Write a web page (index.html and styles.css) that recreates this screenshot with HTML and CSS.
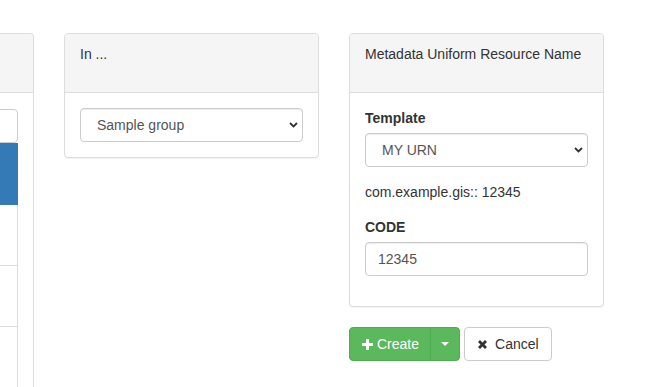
FILE: index.html
```html
<!DOCTYPE html>
<html>
<head>
<meta charset="utf-8">
<link rel="stylesheet" href="styles.css">
</head>
<body>
<div class="row">
  <div class="col">
    <div class="panel panel-list">
      <div class="panel-heading"></div>
      <div class="panel-body list-body">
        <div class="list">
          <div class="list-search"></div>
          <div class="list-item active"></div>
          <div class="list-item"></div>
          <div class="list-item"></div>
          <div class="list-item"></div>
        </div>
      </div>
    </div>
  </div>
  <div class="col">
    <div class="panel">
      <div class="panel-heading">In ...</div>
      <div class="panel-body">
        <div class="select-wrap">
          <select class="form-control"><option>Sample group</option></select>
          <svg class="chev" width="9" height="6" viewBox="0 0 9 6"><path d="M1 1 L4.5 4.5 L8 1" fill="none" stroke="#333" stroke-width="1.8"/></svg>
        </div>
      </div>
    </div>
  </div>
  <div class="col">
    <div class="panel">
      <div class="panel-heading">Metadata Uniform Resource Name</div>
      <div class="panel-body">
        <div class="form-group">
          <label class="label">Template</label>
          <div class="select-wrap">
            <select class="form-control"><option>MY URN</option></select>
            <svg class="chev" width="9" height="6" viewBox="0 0 9 6"><path d="M1 1 L4.5 4.5 L8 1" fill="none" stroke="#333" stroke-width="1.8"/></svg>
          </div>
        </div>
        <p class="urn">com.example.gis:: 12345</p>
        <div class="form-group">
          <label class="label">CODE</label>
          <input class="form-control input" type="text" value="12345">
        </div>
      </div>
    </div>
    <div class="actions">
      <div class="btn-group">
        <button class="btn btn-success main"><svg width="11" height="11" viewBox="0 0 11 11"><path d="M4 0h3v4h4v3H7v4H4V7H0V4h4z" fill="#fff"/></svg>Create</button>
        <button class="btn btn-success caret-btn"><span class="caret"></span></button>
      </div>
      <button class="btn btn-default"><svg width="11" height="11" viewBox="0 0 11 11"><path d="M1 3 L3 1 L5.5 3.5 L8 1 L10 3 L7.5 5.5 L10 8 L8 10 L5.5 7.5 L3 10 L1 8 L3.5 5.5 Z" fill="#333"/></svg>Cancel</button>
    </div>
  </div>
</div>
</body>
</html>
```

FILE: styles.css
```css
* { box-sizing: border-box; }
html, body { margin: 0; padding: 0; background: #fff; overflow: hidden; }
body {
  font-family: "Liberation Sans", Arial, sans-serif;
  font-size: 14px;
  line-height: 20px;
  color: #333;
  height: 387px;
}
.row {
  display: flex;
  gap: 30px;
  margin-left: -221px;
  padding-top: 33px;
}
.col { width: 255px; flex: none; }
.panel {
  border: 1px solid #ddd;
  border-radius: 4px;
  background: #fff;
  box-shadow: 0 1px 1px rgba(0,0,0,.05);
  margin-bottom: 20px;
}
.panel-list { margin-bottom: 0; border-bottom: none; border-radius: 4px 4px 0 0; }
.panel-heading {
  height: 59px;
  padding: 10px 15px;
  background: #f5f5f5;
  border-bottom: 1px solid #ddd;
  border-radius: 3px 3px 0 0;
  color: #333;
}
.panel-body { padding: 15px; }
.list-body { padding-bottom: 0; height: 294px; overflow: hidden; }
.list { display: flex; flex-direction: column; }
.list-search {
  height: 34px;
  margin-top: 1px;
  border: 1px solid #ccc;
  border-radius: 4px;
  flex: none;
}
.list-item {
  height: 61px;
  border: 1px solid #ddd;
  border-top: none;
  flex: none;
}
.list-item.active {
  height: 62px;
  background: #337ab7;
  border-color: #337ab7;
}
.select-wrap { position: relative; }
.form-control {
  display: block;
  width: 100%;
  height: 34px;
  padding: 6px 16px;
  font-family: inherit;
  font-size: 14px;
  color: #555;
  background: #fff;
  border: 1px solid #ccc;
  border-radius: 4px;
  box-shadow: inset 0 1px 1px rgba(0,0,0,.075);
  -webkit-appearance: none;
  appearance: none;
  margin: 0;
}
.input { padding-left: 12px; }
.chev { position: absolute; right: 5px; top: 14px; pointer-events: none; }
.form-group { margin-bottom: 15px; }
.label {
  display: block;
  font-weight: bold;
  margin-bottom: 5px;
}
.urn { margin: 0 0 15px; }
.actions { display: flex; gap: 4px; }
.btn-group { display: flex; }
.btn {
  height: 34px;
  font-family: inherit;
  font-size: 14px;
  line-height: 20px;
  padding: 6px 12px;
  border: 1px solid transparent;
  border-radius: 4px;
  display: flex;
  align-items: center;
  gap: 4px;
  cursor: pointer;
}
.btn-success { background: #5cb85c; border-color: #4cae4c; color: #fff; }
.btn-group .main { border-radius: 4px 0 0 4px; padding-right: 11px; }
.btn-group .caret-btn {
  border-radius: 0 4px 4px 0;
  margin-left: -1px;
  width: 30px;
  padding: 0;
  justify-content: center;
}
.caret {
  width: 0; height: 0;
  border-top: 4px solid #fff;
  border-left: 4px solid transparent;
  border-right: 4px solid transparent;
}
.btn-default { background: #fff; border-color: #ccc; color: #333; padding-left: 12px; padding-right: 12px; gap: 7px; }
```
